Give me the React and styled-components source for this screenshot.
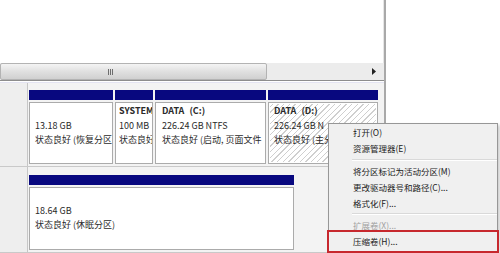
import React from 'react';
import styled, { createGlobalStyle } from 'styled-components';

const Global = createGlobalStyle`
  html, body { margin: 0; padding: 0; background: #fff; }
  body {
    width: 500px; height: 253px; overflow: hidden;
    font-family: "Noto Sans CJK SC", "Noto Sans", sans-serif;
  }
`;

const Screen = styled.div`
  position: relative;
  width: 500px;
  height: 253px;
  overflow: hidden;
  display: flex;
  background: #fff;
`;

const MainPane = styled.div`
  width: 384px;
  display: flex;
  flex-direction: column;
  border-right: 2px solid #a9a9a9;
`;

const SidePane = styled.div`
  flex: 1;
  background: #fff;
`;

const ListArea = styled.div`
  height: 65px;
  background: #fff;
  border-right: 1px solid #e6e6e6;
  box-sizing: border-box;
`;

const HScroll = styled.div`
  height: 17px;
  display: flex;
  align-items: stretch;
  background: #ececec;
`;

const Thumb = styled.div`
  width: 267px;
  box-sizing: border-box;
  border: 1px solid #b3b3b3;
  border-radius: 2px;
  background: linear-gradient(#f4f4f4, #e0e0e0 50%, #d0d0d0);
  display: flex;
  align-items: center;
  padding-left: 107px;
`;

const Grip = styled.div`
  width: 5px;
  height: 6px;
  background: repeating-linear-gradient(90deg, #6d6d6d 0 1px, transparent 1px 2px);
`;

const Track = styled.div`
  flex: 1;
  display: flex;
  align-items: center;
  justify-content: flex-end;
  padding-right: 8px;
`;

const PaneDivider = styled.div`
  height: 1px;
  background: #fff;
  border-top: 1px solid #8d8d8d;
  border-bottom: 1px solid #e4e4f2;
`;

const DiskArea = styled.div`
  flex: 1;
  display: flex;
  flex-direction: column;
  background: #f3f3f3;
`;

const DiskRow = styled.div`
  height: ${(p) => p.$h}px;
  flex: none;
  display: flex;
  border-bottom: 1px solid #c9c9c9;
  box-sizing: border-box;
`;

const LabelCol = styled.div`
  width: 27px;
  background: #eeeeee;
  border-right: 1px solid #c6c6c6;
`;

const Partitions = styled.div`
  flex: 1;
  display: flex;
  gap: 2px;
  padding: ${(p) => p.$pt}px 0 2px 1px;
`;

const Partition = styled.div`
  width: ${(p) => p.$w}px;
  display: flex;
  flex-direction: column;
  gap: 2px;
`;

const Bar = styled.div`
  height: 10px;
  background: #08087f;
`;

const Box = styled.div`
  flex: 1;
  border: 1px solid #ababab;
  box-shadow: inset 0 0 0 1px #fff;
  background: ${(p) =>
    p.$hatched
      ? 'repeating-linear-gradient(135deg, #ffffff 0 3px, #cfcfcf 3px 4px)'
      : '#fff'};
  padding: 1px 1px 1px ${(p) => p.$pl}px;
  overflow: hidden;
`;

const Line = styled.div`
  font-size: 9px;
  line-height: 14.5px;
  height: 14.5px;
  white-space: nowrap;
  color: #2a2a2a;
  font-weight: ${(p) => (p.$bold ? 700 : 400)};
  word-spacing: ${(p) => (p.$bold ? '3px' : '0')};
`;

const Menu = styled.div`
  position: absolute;
  left: 328px;
  top: 123px;
  width: 170px;
  height: 140px;
  box-sizing: border-box;
  background: #f0f0f0;
  border: 1px solid #979797;
  box-shadow: 2px 2px 3px rgba(0, 0, 0, 0.2);
`;

const MenuItem = styled.div`
  height: 16px;
  line-height: 16px;
  padding-left: 24px;
  font-size: 8.5px;
  white-space: nowrap;
  color: ${(p) => (p.$disabled ? '#a2a2a2' : '#1b1b1b')};
`;

const MenuSep = styled.div`
  height: ${(p) => p.$h}px;
  display: flex;
  align-items: center;
  padding-left: 23px;
  &::after {
    content: '';
    flex: 1;
    height: 1px;
    background: #d9d9d9;
    border-bottom: 1px solid #fff;
  }
`;

const Callout = styled.div`
  position: absolute;
  left: 327px;
  top: 230px;
  width: 172px;
  height: 23px;
  box-sizing: border-box;
  border: 2px solid #c7282e;
`;

const parts = [
  { w: 84, pl: 5, lines: ['\u00a0', '13.18 GB', '状态良好 (恢复分区'] },
  { w: 38, pl: 3, lines: ['SYSTEM', '100 MB', '状态良好'] },
  { w: 111, pl: 6, lines: ['DATA (C:)', '226.24 GB NTFS', '状态良好 (启动, 页面文件'] },
  { w: 110, pl: 5, hatched: true, lines: ['DATA (D:)', '226.24 GB N', '状态良好 (主分'] },
];

export default function App() {
  return (
    <>
      <Global />
      <Screen>
        <MainPane>
          <ListArea />
          <HScroll>
            <Thumb>
              <Grip />
            </Thumb>
            <Track>
              <svg width="4" height="7" viewBox="0 0 4 7">
                <path d="M0 0 L4 3.5 L0 7 Z" fill="#222" />
              </svg>
            </Track>
          </HScroll>
          <PaneDivider />
          <DiskArea>
            <DiskRow $h={84}>
              <LabelCol />
              <Partitions $pt={7}>
                {parts.map((p, i) => (
                  <Partition key={i} $w={p.w}>
                    <Bar />
                    <Box $hatched={p.hatched} $pl={p.pl}>
                      {p.lines.map((l, j) => (
                        <Line key={j} $bold={j === 0}>
                          {l}
                        </Line>
                      ))}
                    </Box>
                  </Partition>
                ))}
              </Partitions>
            </DiskRow>
            <DiskRow $h={86}>
              <LabelCol />
              <Partitions $pt={8}>
                <Partition $w={265}>
                  <Bar />
                  <Box $pl={5}>
                    <Line $bold>{'\u00a0'}</Line>
                    <Line>18.64 GB</Line>
                    <Line>状态良好 (休眠分区)</Line>
                  </Box>
                </Partition>
              </Partitions>
            </DiskRow>
          </DiskArea>
        </MainPane>
        <SidePane />
        <Menu>
          <MenuItem>打开(O)</MenuItem>
          <MenuItem>资源管理器(E)</MenuItem>
          <MenuSep $h={7} />
          <MenuItem>将分区标记为活动分区(M)</MenuItem>
          <MenuItem>更改驱动器号和路径(C)...</MenuItem>
          <MenuItem>格式化(F)...</MenuItem>
          <MenuSep $h={6} />
          <MenuItem $disabled>扩展卷(X)...</MenuItem>
          <MenuItem>压缩卷(H)...</MenuItem>
        </Menu>
        <Callout />
      </Screen>
    </>
  );
}
